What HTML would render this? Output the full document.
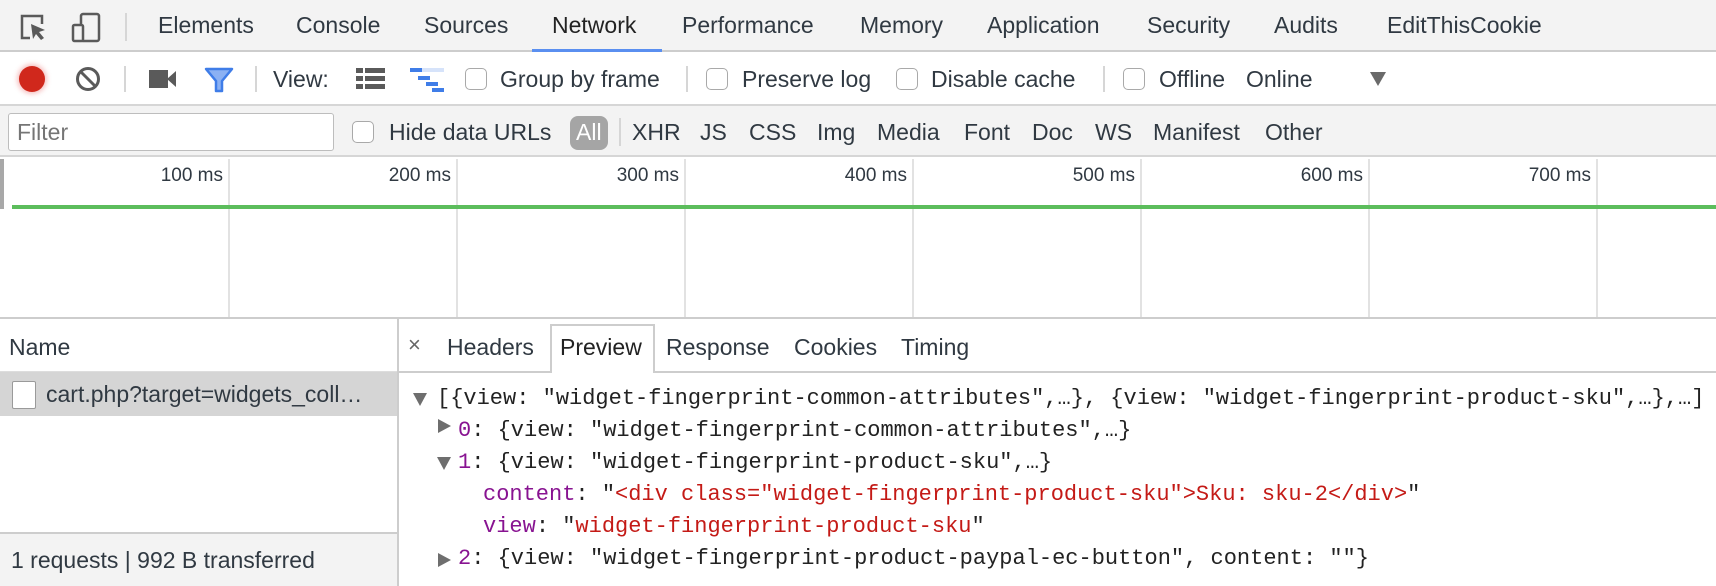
<!DOCTYPE html>
<html><head><meta charset="utf-8"><style>
*{margin:0;padding:0;box-sizing:border-box}
body{width:1716px;height:586px;overflow:hidden;background:#fff;font-family:"Liberation Sans",Arial,sans-serif;font-size:23px;color:#303942;position:relative}
.a{position:absolute;white-space:nowrap}
.t{line-height:1}
.cb{position:absolute;width:22px;height:22px;border:1.5px solid #a9a9a9;border-radius:5px;background:#fff}
.sep{position:absolute;width:2px;background:#d6d6d6}
.vl{position:absolute;top:159px;width:2px;height:159px;background:#e2e2e2}
.ms{position:absolute;top:165px;font-size:19px;color:#303942;text-align:right;width:100px}
.mono{font-family:"Liberation Mono",Menlo,monospace;font-size:22px;color:#222}
.k{color:#881391}.s{color:#c41a16}
.tri{position:absolute;width:0;height:0}
</style></head><body>
<div class="a" style="left:0;top:0;width:1716px;height:52px;background:#f3f3f3;border-bottom:2px solid #cdcdcd"></div>
<svg class="a" style="left:18px;top:12px" width="30" height="32" viewBox="0 0 30 32"><path d="M12 26H4V4h20v8" fill="none" stroke="#5a5a5a" stroke-width="2.5"/><path d="M13 12l14 6-6 2 5 6-3 2-5-6-3 5z" fill="#5a5a5a"/></svg>
<svg class="a" style="left:70px;top:12px" width="34" height="32" viewBox="0 0 34 32"><rect x="11" y="2" width="18" height="27" rx="2" fill="none" stroke="#5a5a5a" stroke-width="2.5"/><rect x="3" y="13" width="10" height="16" rx="1.5" fill="#f3f3f3" stroke="#5a5a5a" stroke-width="2.5"/></svg>
<div class="sep" style="left:125px;top:13px;height:28px"></div>
<div class="a t" style="left:158px;top:14px">Elements</div>
<div class="a t" style="left:296px;top:14px">Console</div>
<div class="a t" style="left:424px;top:14px">Sources</div>
<div class="a t" style="left:552px;top:14px;color:#222">Network</div>
<div class="a" style="left:532px;top:49px;width:130px;height:3px;background:#5a8ff0"></div>
<div class="a t" style="left:682px;top:14px">Performance</div>
<div class="a t" style="left:860px;top:14px">Memory</div>
<div class="a t" style="left:987px;top:14px">Application</div>
<div class="a t" style="left:1147px;top:14px">Security</div>
<div class="a t" style="left:1274px;top:14px">Audits</div>
<div class="a t" style="left:1387px;top:14px">EditThisCookie</div>
<div class="a" style="left:0;top:104px;width:1716px;height:2px;background:#d6d6d6"></div>
<div class="a" style="left:19px;top:66px;width:26px;height:26px;border-radius:50%;background:#d0281c;box-shadow:0 0 5px 2px rgba(230,80,80,.35)"></div>
<svg class="a" style="left:75px;top:66px" width="26" height="26" viewBox="0 0 26 26"><circle cx="13" cy="13" r="10.5" fill="none" stroke="#5a5a5a" stroke-width="3"/><path d="M6 6l14 14" stroke="#5a5a5a" stroke-width="3"/></svg>
<div class="sep" style="left:124px;top:66px;height:26px"></div>
<svg class="a" style="left:149px;top:69px" width="28" height="20" viewBox="0 0 28 20"><rect x="0" y="1" width="19" height="18" fill="#5a5a5a"/><path d="M18 10l9-8v16z" fill="#5a5a5a"/></svg>
<svg class="a" style="left:204px;top:67px" width="30" height="26" viewBox="0 0 30 26"><path d="M2 2h26L18 14v10h-6V14z" fill="#8bb1f3" stroke="#3f7de8" stroke-width="2.5" stroke-linejoin="round"/></svg>
<div class="sep" style="left:255px;top:66px;height:26px"></div>
<div class="a t" style="left:273px;top:68px">View:</div>
<svg class="a" style="left:356px;top:68px" width="29" height="22"><rect x="0" y="0" width="7" height="5" fill="#5a5a5a"/><rect x="9" y="0" width="20" height="5" fill="#5a5a5a"/><rect x="0" y="8" width="7" height="5" fill="#5a5a5a"/><rect x="9" y="8" width="20" height="5" fill="#5a5a5a"/><rect x="0" y="16" width="7" height="5" fill="#5a5a5a"/><rect x="9" y="16" width="20" height="5" fill="#5a5a5a"/></svg>
<svg class="a" style="left:410px;top:68px" width="34" height="24"><rect x="0" y="0" width="34" height="4" fill="#d6e3fa"/><rect x="0" y="0" width="12" height="4" fill="#3f7de8"/><rect x="8" y="8" width="12" height="4" fill="#3f7de8"/><rect x="16" y="14" width="12" height="4" fill="#3f7de8"/><rect x="22" y="20" width="12" height="4" fill="#3f7de8"/></svg>
<div class="cb" style="left:465px;top:68px"></div>
<div class="a t" style="left:500px;top:68px">Group by frame</div>
<div class="sep" style="left:686px;top:66px;height:26px"></div>
<div class="cb" style="left:706px;top:68px"></div>
<div class="a t" style="left:742px;top:68px">Preserve log</div>
<div class="cb" style="left:896px;top:68px"></div>
<div class="a t" style="left:931px;top:68px">Disable cache</div>
<div class="sep" style="left:1103px;top:66px;height:26px"></div>
<div class="cb" style="left:1123px;top:68px"></div>
<div class="a t" style="left:1159px;top:68px">Offline</div>
<div class="a t" style="left:1246px;top:68px">Online</div>
<div class="tri" style="left:1370px;top:72px;border-left:8px solid transparent;border-right:8px solid transparent;border-top:14px solid #6a6a6a"></div>
<div class="a" style="left:0;top:106px;width:1716px;height:51px;background:#f3f3f3;border-bottom:2px solid #d6d6d6"></div>
<div class="a" style="left:8px;top:113px;width:326px;height:38px;background:#fff;border:1.5px solid #bdbdbd;border-radius:3px"></div>
<div class="a t" style="left:17px;top:121px;color:#757575">Filter</div>
<div class="cb" style="left:352px;top:121px"></div>
<div class="a t" style="left:389px;top:121px">Hide data URLs</div>
<div class="a" style="left:570px;top:116px;width:38px;height:34px;border-radius:8px;background:#a5a5a5"></div>
<div class="a t" style="left:576px;top:121px;color:#fff">All</div>
<div class="sep" style="left:619px;top:118px;height:28px"></div>
<div class="a t" style="left:632px;top:121px">XHR</div>
<div class="a t" style="left:700px;top:121px">JS</div>
<div class="a t" style="left:749px;top:121px">CSS</div>
<div class="a t" style="left:817px;top:121px">Img</div>
<div class="a t" style="left:877px;top:121px">Media</div>
<div class="a t" style="left:964px;top:121px">Font</div>
<div class="a t" style="left:1032px;top:121px">Doc</div>
<div class="a t" style="left:1095px;top:121px">WS</div>
<div class="a t" style="left:1153px;top:121px">Manifest</div>
<div class="a t" style="left:1265px;top:121px">Other</div>
<div class="vl" style="left:228px"></div><div class="vl" style="left:456px"></div><div class="vl" style="left:684px"></div><div class="vl" style="left:912px"></div><div class="vl" style="left:1140px"></div><div class="vl" style="left:1368px"></div><div class="vl" style="left:1596px"></div>
<div class="ms" style="left:123px">100 ms</div><div class="ms" style="left:351px">200 ms</div><div class="ms" style="left:579px">300 ms</div><div class="ms" style="left:807px">400 ms</div><div class="ms" style="left:1035px">500 ms</div><div class="ms" style="left:1263px">600 ms</div><div class="ms" style="left:1491px">700 ms</div>
<div class="a" style="left:0;top:159px;width:4px;height:50px;background:#a8a8a8"></div>
<div class="a" style="left:12px;top:205px;width:1704px;height:4px;background:#5cbd5c"></div>
<div class="a" style="left:0;top:317px;width:1716px;height:2px;background:#cdcdcd"></div>
<div class="a" style="left:397px;top:319px;width:2px;height:267px;background:#cdcdcd"></div>
<div class="a t" style="left:9px;top:336px">Name</div>
<div class="a" style="left:0;top:371px;width:397px;height:1px;background:#ddd"></div>
<div class="a" style="left:0;top:372px;width:397px;height:44px;background:#d5d5d5"></div>
<div class="a" style="left:12px;top:381px;width:24px;height:28px;background:#fff;border:1.5px solid #9a9a9a;border-radius:2px"></div>
<div class="a t" style="left:46px;top:383px">cart.php?target=widgets_coll…</div>
<div class="a" style="left:0;top:532px;width:397px;height:54px;background:#f3f3f3;border-top:2px solid #cdcdcd"></div>
<div class="a t" style="left:11px;top:549px">1 requests | 992 B transferred</div>
<div class="a" style="left:399px;top:371px;width:1317px;height:2px;background:#cdcdcd"></div>
<div class="a t" style="left:408px;top:334px;color:#666;font-size:22px">×</div>
<div class="a t" style="left:447px;top:336px">Headers</div>
<div class="a" style="left:550px;top:324px;width:105px;height:49px;background:#fff;border:2px solid #cdcdcd;border-bottom:none"></div>
<div class="a t" style="left:560px;top:336px;color:#222">Preview</div>
<div class="a t" style="left:666px;top:336px">Response</div>
<div class="a t" style="left:794px;top:336px">Cookies</div>
<div class="a t" style="left:901px;top:336px">Timing</div>
<div class="tri" style="left:413px;top:393px;border-left:7px solid transparent;border-right:7px solid transparent;border-top:13px solid #6e6e6e"></div>
<div class="a mono" style="left:437px;top:386px">[{view: "widget-fingerprint-common-attributes",…}, {view: "widget-fingerprint-product-sku",…},…]</div>
<div class="tri" style="left:438px;top:419px;border-top:7px solid transparent;border-bottom:7px solid transparent;border-left:13px solid #6e6e6e"></div>
<div class="a mono" style="left:458px;top:418px"><span class="k">0</span>: {view: "widget-fingerprint-common-attributes",…}</div>
<div class="tri" style="left:437px;top:457px;border-left:7px solid transparent;border-right:7px solid transparent;border-top:13px solid #6e6e6e"></div>
<div class="a mono" style="left:458px;top:450px"><span class="k">1</span>: {view: "widget-fingerprint-product-sku",…}</div>
<div class="a mono" style="left:483px;top:482px"><span class="k">content</span>: "<span class="s">&lt;div class="widget-fingerprint-product-sku"&gt;Sku: sku-2&lt;/div&gt;</span>"</div>
<div class="a mono" style="left:483px;top:514px"><span class="k">view</span>: "<span class="s">widget-fingerprint-product-sku</span>"</div>
<div class="tri" style="left:438px;top:553px;border-top:7px solid transparent;border-bottom:7px solid transparent;border-left:13px solid #6e6e6e"></div>
<div class="a mono" style="left:458px;top:546px"><span class="k">2</span>: {view: "widget-fingerprint-product-paypal-ec-button", content: ""}</div>
</body></html>
